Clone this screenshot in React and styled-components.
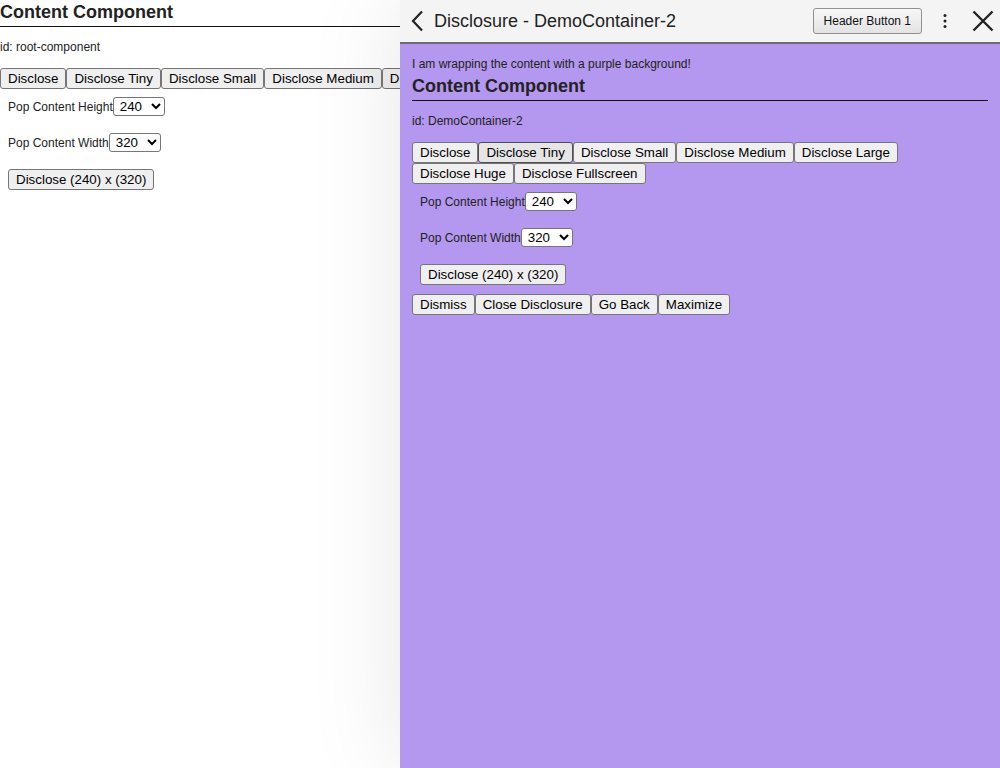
import React from "react";
import styled, { createGlobalStyle } from "styled-components";

const GlobalStyle = createGlobalStyle`
  html, body {
    margin: 0;
    padding: 0;
    background: #ffffff;
    font-family: "Liberation Sans", Arial, sans-serif;
    color: #222222;
  }
  body {
    overflow: hidden;
  }
`;

const Page = styled.div`
  width: 1000px;
  height: 768px;
  position: relative;
`;

const Content = styled.div`
  display: flex;
  flex-direction: column;
  padding: ${(p) => p.$padding || "0"};
`;

const Note = styled.div`
  font-size: 12px;
  line-height: 14px;
  margin-bottom: 3px;
`;

const Heading = styled.h2`
  margin: 0;
  font-size: 18px;
  font-weight: bold;
  line-height: 24px;
  padding-bottom: 2px;
  border-bottom: 1px solid #111111;
  color: #222222;
`;

const IdText = styled.p`
  margin: 13px 0 14px;
  font-size: 12px;
  line-height: 14px;
`;

const ButtonRow = styled.div`
  display: flex;
  flex-wrap: wrap;
`;

const Button = styled.button`
  box-sizing: border-box;
  height: 21px;
  padding: 0 7px;
  margin: 0;
  font-family: "Liberation Sans", Arial, sans-serif;
  font-size: 13.333px;
  line-height: 19px;
  color: #000000;
  background: ${(p) => (p.$hover ? "#e5e5e5" : "#efefef")};
  border: 1px solid ${(p) => (p.$hover ? "#4f4f4f" : "#767676")};
  border-radius: 3px;
  white-space: nowrap;
  cursor: pointer;
`;

const Controls = styled.div`
  display: flex;
  flex-direction: column;
  align-items: flex-start;
  gap: 17px;
  padding: 8px 8px 9px;
`;

const Field = styled.label`
  display: flex;
  align-items: center;
  font-size: 12px;
`;

const Select = styled.select`
  box-sizing: border-box;
  width: 52px;
  height: 19px;
  padding: 0 0 0 2px;
  font-family: "Liberation Sans", Arial, sans-serif;
  font-size: 13.333px;
  color: #000000;
  background: #ffffff;
  border: 1px solid #767676;
  border-radius: 3px;
`;

const Panel = styled.aside`
  position: absolute;
  top: 0;
  right: 0;
  width: 600px;
  height: 768px;
  display: flex;
  flex-direction: column;
  background: #b497ee;
  box-shadow: 0 0 90px rgba(0, 0, 0, 0.1);
`;

const Header = styled.header`
  height: 42px;
  display: flex;
  align-items: center;
  background: #f4f4f4;
  border-bottom: 2px solid #6c6c6c;
  padding: 0 5px 0 6px;
`;

const IconButton = styled.span`
  display: flex;
  align-items: center;
  justify-content: center;
  width: ${(p) => p.$w || 24}px;
  height: 24px;
  margin-left: ${(p) => p.$ml || 0}px;
  color: #222222;
  cursor: pointer;
`;

const Title = styled.h1`
  flex: 1;
  margin: 0 0 0 6px;
  font-size: 18px;
  font-weight: normal;
  color: #222222;
`;

const HeaderButton = styled.button`
  box-sizing: border-box;
  height: 26px;
  padding: 0 10px;
  margin-right: 12px;
  font-family: "Liberation Sans", Arial, sans-serif;
  font-size: 12px;
  color: #111111;
  background: linear-gradient(#f7f7f7, #e3e3e3);
  border: 1px solid #8f8f8f;
  border-radius: 3px;
`;

const sizes = ["Disclose", "Disclose Tiny", "Disclose Small", "Disclose Medium", "Disclose Large", "Disclose Huge", "Disclose Fullscreen"];

const Demo = ({ id, hover, extra }) => (
  <>
    <Heading>Content Component</Heading>
    <IdText>id: {id}</IdText>
    <ButtonRow>
      {sizes.map((s, i) => (
        <Button key={s} $hover={hover && i === 1}>{s}</Button>
      ))}
    </ButtonRow>
    <Controls>
      <Field>
        Pop Content Height
        <Select defaultValue="240">
          <option>120</option>
          <option>240</option>
          <option>480</option>
        </Select>
      </Field>
      <Field>
        Pop Content Width
        <Select defaultValue="320">
          <option>160</option>
          <option>320</option>
          <option>640</option>
        </Select>
      </Field>
      <Button>Disclose (240) x (320)</Button>
    </Controls>
    {extra}
  </>
);

const App = () => (
  <Page>
    <GlobalStyle />
    <Content>
      <Demo id="root-component" />
    </Content>
    <Panel>
      <Header>
        <IconButton $w={22}>
          <svg width="14" height="22" viewBox="0 0 14 22" fill="none">
            <path d="M12 1.5 L3 11 L12 20.5" stroke="#222" strokeWidth="2.2" />
          </svg>
        </IconButton>
        <Title>Disclosure - DemoContainer-2</Title>
        <HeaderButton>Header Button 1</HeaderButton>
        <IconButton $w={22}>
          <svg width="6" height="16" viewBox="0 0 6 16">
            <circle cx="3" cy="2.5" r="1.5" fill="#222" />
            <circle cx="3" cy="8" r="1.5" fill="#222" />
            <circle cx="3" cy="13.5" r="1.5" fill="#222" />
          </svg>
        </IconButton>
        <IconButton $w={24} $ml={15}>
          <svg width="22" height="22" viewBox="0 0 22 22">
            <path d="M1.5 1.5 L20.5 20.5 M20.5 1.5 L1.5 20.5" stroke="#222" strokeWidth="2.4" />
          </svg>
        </IconButton>
      </Header>
      <Content $padding="13px 12px">
        <Note>I am wrapping the content with a purple background!</Note>
        <Demo
          id="DemoContainer-2"
          hover
          extra={
            <ButtonRow>
              <Button>Dismiss</Button>
              <Button>Close Disclosure</Button>
              <Button>Go Back</Button>
              <Button>Maximize</Button>
            </ButtonRow>
          }
        />
      </Content>
    </Panel>
  </Page>
);

export default App;
